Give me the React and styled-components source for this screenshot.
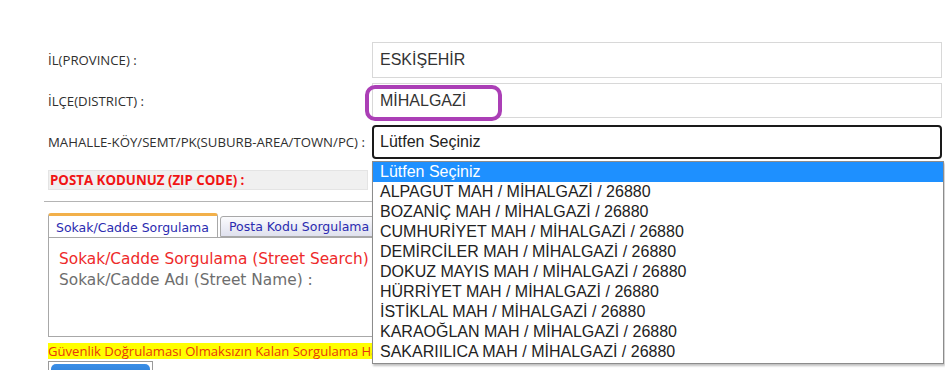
import React from "react";
import styled, { createGlobalStyle } from "styled-components";

const GlobalStyle = createGlobalStyle`
  html, body {
    margin: 0;
    padding: 0;
    background: #ffffff;
  }
  body {
    font-family: "Open Sans", "Liberation Sans", sans-serif;
    overflow: hidden;
  }
`;

const OPTIONS = [
  "ALPAGUT MAH / MİHALGAZİ / 26880",
  "BOZANİÇ MAH / MİHALGAZİ / 26880",
  "CUMHURİYET MAH / MİHALGAZİ / 26880",
  "DEMİRCİLER MAH / MİHALGAZİ / 26880",
  "DOKUZ MAYIS MAH / MİHALGAZİ / 26880",
  "HÜRRİYET MAH / MİHALGAZİ / 26880",
  "İSTİKLAL MAH / MİHALGAZİ / 26880",
  "KARAOĞLAN MAH / MİHALGAZİ / 26880",
  "SAKARIILICA MAH / MİHALGAZİ / 26880",
];

const S = {
  Page: styled.div`
    width: 945px;
    height: 370px;
    box-sizing: border-box;
    padding: 42px 0 0 48px;
    overflow: hidden;
  `,
  Row: styled.div`
    display: grid;
    grid-template-columns: 324px 570px;
    align-items: center;
    height: ${(p) => p.$h}px;
    margin-bottom: ${(p) => p.$mb || 0}px;
  `,
  Label: styled.div`
    font-size: 13.2px;
    color: #2f2f2f;
    white-space: nowrap;
  `,
  Field: styled.div`
    position: relative;
    height: 100%;
  `,
  Input: styled.div`
    box-sizing: border-box;
    height: 100%;
    border: 1px solid #d8d8d8;
    padding-left: 7px;
    display: flex;
    align-items: center;
    font-family: "Liberation Sans", Arial, sans-serif;
    font-size: 16px;
    color: #333;
  `,
  Highlight: styled.div`
    position: absolute;
    left: -7px;
    top: 2px;
    width: 137px;
    height: 36px;
    box-sizing: border-box;
    border: 4px solid #ab3fb6;
    border-radius: 10px;
    pointer-events: none;
  `,
  Select: styled.div`
    box-sizing: border-box;
    height: 100%;
    border: 2px solid #1a1a1a;
    border-radius: 4px;
    padding-left: 6px;
    display: flex;
    align-items: center;
    font-family: "Liberation Sans", Arial, sans-serif;
    font-size: 16px;
    color: #222;
  `,
  Dropdown: styled.ul`
    position: absolute;
    z-index: 10;
    top: calc(100% + 2px);
    left: 0;
    width: 570px;
    margin: 0;
    padding: 0 0 1px;
    list-style: none;
    background: #fff;
    border: 1px solid #8c8c8c;
    box-shadow: 1px 2px 2px rgba(0, 0, 0, 0.25);
  `,
  Option: styled.li`
    height: 20px;
    line-height: 20px;
    padding-left: 7px;
    font-family: "Liberation Sans", Arial, sans-serif;
    font-size: 16px;
    white-space: nowrap;
    color: ${(p) => (p.$active ? "#fff" : "#222")};
    background: ${(p) => (p.$active ? "#1e90ff" : "transparent")};
  `,
  ZipRow: styled.div`
    display: grid;
    grid-template-columns: 320px;
    height: 20px;
    margin-top: 11px;
  `,
  ZipLabel: styled.div`
    box-sizing: border-box;
    background: #f0f0f0;
    border: 1px solid #e4e4e4;
    padding-left: 1px;
    display: flex;
    align-items: center;
    font-size: 13.3px;
    font-weight: 700;
    color: #f01414;
    white-space: nowrap;
  `,
  Divider: styled.div`
    margin: 11px 0 0 -4px;
    width: 898px;
    height: 1px;
    background: #b4b4b4;
  `,
  Tabs: styled.div`
    display: flex;
    align-items: flex-end;
    gap: 2px;
    margin-top: 11px;
    height: 24px;
    width: 324px;
    overflow: hidden;
  `,
  Tab: styled.div`
    flex: none;
    box-sizing: border-box;
    height: ${(p) => (p.$active ? 25 : 21)}px;
    width: ${(p) => p.$w}px;
    margin-bottom: ${(p) => (p.$active ? -1 : 0)}px;
    padding-left: ${(p) => (p.$active ? 7 : 8)}px;
    display: flex;
    align-items: center;
    font-family: "DejaVu Sans", Verdana, sans-serif;
    font-size: 12.5px;
    color: #2b2bb0;
    white-space: nowrap;
    border: 1px solid #a8a8a8;
    border-bottom: ${(p) => (p.$active ? "none" : "1px solid #a8a8a8")};
    border-top: ${(p) => (p.$active ? "3px solid #f2b04a" : "1px solid #a8a8a8")};
    border-radius: 3px 3px 0 0;
    background: ${(p) =>
      p.$active ? "#fff" : "linear-gradient(#fbfbfd, #dfe1ee)"};
  `,
  Panel: styled.div`
    box-sizing: border-box;
    width: 640px;
    height: 100px;
    border: 1px solid #a8a8a8;
    padding: 11px 0 0 10px;
    font-family: "DejaVu Sans", Verdana, sans-serif;
    font-size: 15.4px;
    line-height: 21px;
  `,
  PanelTitle: styled.div`
    color: #ee2a2a;
    white-space: nowrap;
  `,
  PanelText: styled.div`
    color: #6e6e6e;
    white-space: nowrap;
  `,
  Warning: styled.div`
    margin-top: 6px;
    height: 16px;
    width: 324px;
    background: #ffff00;
    font-size: 13.1px;
    line-height: 16px;
    color: #e8360c;
    white-space: nowrap;
    overflow: hidden;
  `,
  ButtonFrame: styled.div`
    margin-top: 2px;
    width: 105px;
    height: 30px;
    box-sizing: border-box;
    border: 1px solid #9a9a9a;
    padding: 2px;
  `,
  Button: styled.div`
    height: 100%;
    border-radius: 5px;
    background: linear-gradient(#3a8ee6, #1f6fc8);
  `,
};

const App = () => {
  return (
    <>
      <GlobalStyle />
      <S.Page>
        <S.Row $h={36} $mb={5}>
          <S.Label>İL(PROVINCE) :</S.Label>
          <S.Field>
            <S.Input>ESKİŞEHİR</S.Input>
          </S.Field>
        </S.Row>
        <S.Row $h={35} $mb={7}>
          <S.Label>İLÇE(DISTRICT) :</S.Label>
          <S.Field>
            <S.Input>MİHALGAZİ</S.Input>
            <S.Highlight />
          </S.Field>
        </S.Row>
        <S.Row $h={34}>
          <S.Label>MAHALLE-KÖY/SEMT/PK(SUBURB-AREA/TOWN/PC) :</S.Label>
          <S.Field>
            <S.Select>Lütfen Seçiniz</S.Select>
            <S.Dropdown>
              <S.Option $active>Lütfen Seçiniz</S.Option>
              {OPTIONS.map((o) => (
                <S.Option key={o}>{o}</S.Option>
              ))}
            </S.Dropdown>
          </S.Field>
        </S.Row>
        <S.ZipRow>
          <S.ZipLabel>POSTA KODUNUZ (ZIP CODE) :</S.ZipLabel>
        </S.ZipRow>
        <S.Divider />
        <S.Tabs>
          <S.Tab $active $w={170}>
            Sokak/Cadde Sorgulama
          </S.Tab>
          <S.Tab $w={160}>Posta Kodu Sorgulama</S.Tab>
        </S.Tabs>
        <S.Panel>
          <S.PanelTitle>Sokak/Cadde Sorgulama (Street Search)</S.PanelTitle>
          <S.PanelText>Sokak/Cadde Adı (Street Name) :</S.PanelText>
        </S.Panel>
        <S.Warning>
          Güvenlik Doğrulaması Olmaksızın Kalan Sorgulama Ha
        </S.Warning>
        <S.ButtonFrame>
          <S.Button />
        </S.ButtonFrame>
      </S.Page>
    </>
  );
};

export default App;
